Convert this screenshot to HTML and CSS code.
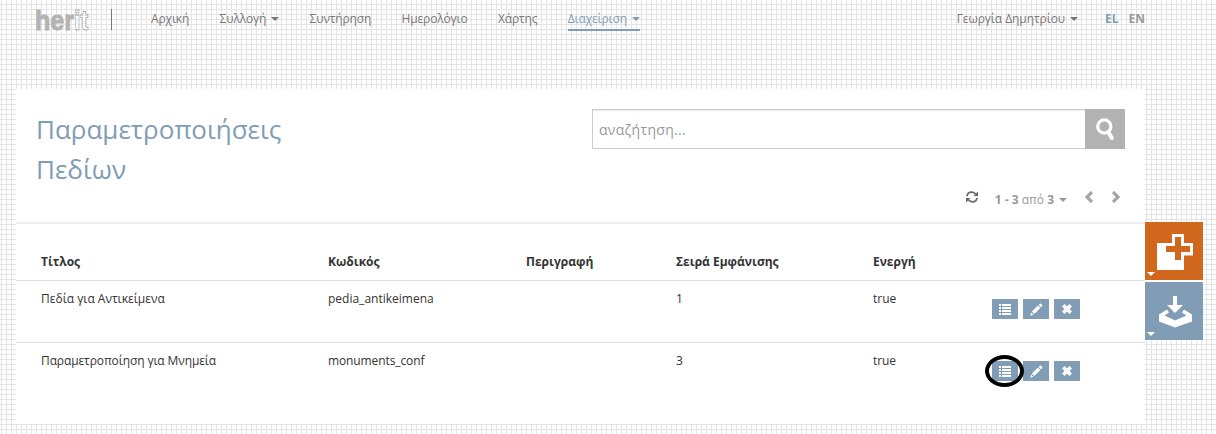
FILE: index.html
```html
<!DOCTYPE html>
<html lang="el">
<head>
<meta charset="utf-8">
<title>herit</title>
<link rel="stylesheet" href="styles.css">
</head>
<body>
<svg class="defs" width="0" height="0">
  <symbol id="list" viewBox="0 0 12 11"><path fill="#fff" d="M0 0h2v2H0zM3 0h9v2H3zM0 3h2v2H0zM3 3h9v2H3zM0 6h2v2H0zM3 6h9v2H3zM0 9h2v2H0zM3 9h9v2H3z"/></symbol>
  <symbol id="pencil" viewBox="0 0 13 13"><path fill="#fff" d="M.3 12.700l.9-3.200 2.300 2.300zM1.900 8.600l6.100-6 2.400 2.400-6.100 6zM8.700 1.900l1.100-1.100q.7-.5 1.200 0l1.200 1.200q.5.600 0 1.200L11.100 4.300z"/></symbol>
  <symbol id="remove" viewBox="0 0 10 10"><path fill="none" stroke="#fff" stroke-width="3.600" d="M1.300 1.300l7.400 7.400M8.700 1.300l-7.400 7.400"/></symbol>
</svg>
<header class="navbar">
  <svg class="logo" width="54" height="24" viewBox="0 0 54 24">
    <text class="logo-her" x="-1" y="20.500" textLength="39" lengthAdjust="spacingAndGlyphs">her</text>
    <text class="logo-it" x="38" y="20.500" textLength="14.500" lengthAdjust="spacingAndGlyphs">it</text>
  </svg>
  <nav class="menu">
    <a>Αρχική</a>
    <a>Συλλογή<i class="caret"></i></a>
    <a>Συντήρηση</a>
    <a>Ημερολόγιο</a>
    <a>Χάρτης</a>
    <a class="active">Διαχείριση<i class="caret"></i></a>
  </nav>
  <div class="user"><a>Γεωργία Δημητρίου<i class="caret"></i></a><b class="lang current">EL</b><b class="lang">EN</b></div>
</header>
<div class="page">
  <main class="panel">
    <section class="top">
      <h1>Παραμετροποιήσεις Πεδίων</h1>
      <div class="controls">
        <div class="search">
          <input type="text" placeholder="αναζήτηση...">
          <button><svg width="40" height="40" viewBox="0 0 40 40"><circle cx="19.300" cy="17.500" r="6.600" fill="none" stroke="#fff" stroke-width="3.200"/><path d="M23.500 23.500l3.300 5.500" stroke="#fff" stroke-width="4" stroke-linecap="round"/></svg></button>
        </div>
        <div class="pager">
          <svg class="refresh" width="12" height="12" viewBox="0 0 12 12"><path fill="none" stroke="#666" stroke-width="1.700" d="M1 5.200C1.400 2.500 3 1.200 5.500 1.200c2 0 3 .6 4 1.800M11 6.800c-.4 2.700-2 4-4.500 4-2 0-3-.6-4-1.800"/><path fill="#666" d="M12 .5V5H7.500zM0 11.500V7h4.500z"/></svg>
          <span class="count"><b>1 - 3</b> από <b>3</b><i class="caret"></i></span>
          <svg class="prev" width="8" height="12" viewBox="0 0 8 12"><path fill="none" stroke="#a6a6a6" stroke-width="3.300" d="M7 1L2 6l5 5"/></svg>
          <svg class="next" width="8" height="12" viewBox="0 0 8 12"><path fill="none" stroke="#a6a6a6" stroke-width="3.300" d="M1 1l5 5-5 5"/></svg>
        </div>
      </div>
    </section>
    <div class="row head"><span>Τίτλος</span><span>Κωδικός</span><span>Περιγραφή</span><span>Σειρά Εμφάνισης</span><span>Ενεργή</span><span></span></div>
    <div class="row"><span>Πεδία για Αντικείμενα</span><span>pedia_antikeimena</span><span></span><span>1</span><span>true</span>
      <div class="actions"><a><svg width="12" height="11"><use href="#list"/></svg></a><a><svg width="13" height="13"><use href="#pencil"/></svg></a><a><svg width="10" height="10"><use href="#remove"/></svg></a></div></div>
    <div class="row last"><span>Παραμετροποίηση για Μνημεία</span><span>monuments_conf</span><span></span><span>3</span><span>true</span>
      <div class="actions"><a class="marked"><svg width="12" height="11"><use href="#list"/></svg></a><a><svg width="13" height="13"><use href="#pencil"/></svg></a><a><svg width="10" height="10"><use href="#remove"/></svg></a></div></div>
  </main>
  <aside class="tools">
    <a class="add"><svg width="58" height="58" viewBox="0 0 58 58"><path fill="#fff" d="M12 21h15v-9h12v9h9v12.500h-9V48H12z"/><path fill="#d0671c" d="M30 15h6v9h9v6h-9v8h-6v-8h-9v-6h9z"/><path fill="#fff" d="M2 50h8l-4 4z"/></svg></a>
    <a class="import"><svg width="58" height="58" viewBox="0 0 58 58"><path fill="#fff" d="M28 14h4v9h6l-8 8-8-8h6z"/><path fill="#fff" d="M14 32.500l8-5 2 3-4.500 3L30 38.500 41.500 33.500l-4.500-3 2-3 8 5v7L30 45.500l-16-6z"/><path fill="#fff" d="M2 50h8l-4 4z"/></svg></a>
  </aside>
</div>
</body>
</html>
```
FILE: styles.css
```css
*, *::after { box-sizing: border-box; }
body {
  margin: 0;
  height: 434px;
  overflow: hidden;
  font: 12px/20px "Open Sans", "Noto Sans", sans-serif;
  color: #333;
  background:
    repeating-linear-gradient(90deg, transparent 0 1px, #e4e4e4 1px 2px, transparent 2px 5px),
    repeating-linear-gradient(180deg, transparent 0 4px, #e4e4e4 4px 5px),
    #fff;
}
.defs { display: block; height: 0; }
.navbar { display: flex; align-items: flex-start; height: 89px; padding: 9px 71px 0 36px; color: #777; }
.logo { flex: none; overflow: visible; }
.logo-her { font: bold 28px "Liberation Sans", sans-serif; fill: #b3b3b3; stroke: #b3b3b3; stroke-width: 1; }
.logo-it { font: bold 28px "Liberation Sans", sans-serif; fill: #fff; stroke: #8a8a8a; stroke-width: .8; stroke-dasharray: 1.5 .5; }
.menu { display: flex; gap: 30.4px; margin-left: 21px; padding-left: 39px; border-left: 1px solid #777; height: 21px; letter-spacing: -.15px; }
.menu a { height: 22px; white-space: nowrap; }
.menu .active { color: #7f9db5; border-bottom: 2px solid #7f9db5; }
.caret { display: inline-block; margin-left: 5px; vertical-align: 2px; border: 4px solid transparent; border-top-color: currentColor; border-bottom: 0; }
.user { margin-left: auto; display: flex; white-space: nowrap; }
.user a { letter-spacing: -.08px; }
.lang { margin-left: 10px; color: #999; }
.current { margin-left: 27px; color: #7f9db5; }
.page { display: flex; padding-left: 16px; }
.panel { width: 1129px; height: 335px; background: #fff; }
.top { display: flex; justify-content: space-between; height: 135px; padding: 20px 20px 0; border-bottom: 2px solid #eee; }
h1 { margin: 0; width: 260px; font-size: 26px; line-height: 40px; font-weight: 400; color: #7f9db5; }
.controls { width: 533px; }
.search { display: flex; height: 40px; }
.search input { flex: 1; min-width: 0; padding: 0 6px; border: 1px solid #ccc; border-right: 0; box-shadow: inset 0 1px 1px #00000013; font: 14px "Open Sans", sans-serif; letter-spacing: .3px; background: #fff; }
.search input::placeholder { color: #999; opacity: 1; }
.search button { width: 40px; padding: 0; border: 0; background: #b2b2b2; }
.search svg { display: block; }
.pager { display: flex; justify-content: flex-end; align-items: flex-start; padding: 42px 5px 0 0; color: #999; }
.count { margin: -1px 18px 0 17px; }
.next { margin-left: 19px; }
.row { display: grid; grid-template-columns: 287px 198px 150px 197px 119px 1fr; height: 62px; padding: 8px 0 0 25px; border-bottom: 1px solid #ddd; }
.head { height: 57px; padding-top: 28px; font-weight: 700; }
.last { height: 81px; border: 0; letter-spacing: -.11px; }
.actions { display: flex; gap: 5px; padding-top: 10px; }
.actions a { position: relative; display: flex; align-items: center; justify-content: center; width: 26px; height: 20px; background: #819db5; }
.actions a:first-child { padding-top: 1px; }
.marked::after { content: ""; position: absolute; left: -7px; top: -6px; width: 39px; height: 32px; border: 4px solid #000; border-radius: 50%; z-index: 1; }
.tools { display: flex; flex-direction: column; gap: 2px; padding-top: 133px; }
.tools a { width: 58px; height: 58px; box-shadow: 0 0 0 1px #fff8; }
.tools svg { display: block; }
.add { background: #d0671c; }
.import { background: #819db5; }
```
